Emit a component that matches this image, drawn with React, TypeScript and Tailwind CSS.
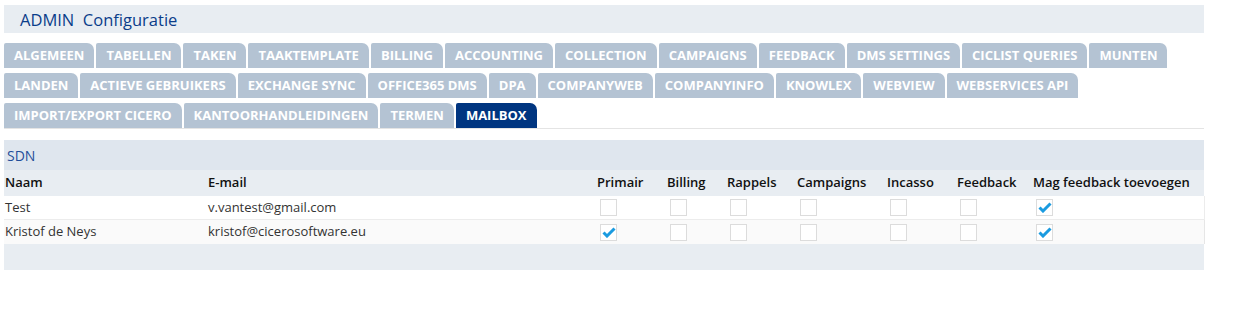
import React from 'react';

const tabs = [
  'ALGEMEEN', 'TABELLEN', 'TAKEN', 'TAAKTEMPLATE', 'BILLING', 'ACCOUNTING', 'COLLECTION', 'CAMPAIGNS',
  'FEEDBACK', 'DMS SETTINGS', 'CICLIST QUERIES', 'MUNTEN', 'LANDEN', 'ACTIEVE GEBRUIKERS', 'EXCHANGE SYNC',
  'OFFICE365 DMS', 'DPA', 'COMPANYWEB', 'COMPANYINFO', 'KNOWLEX', 'WEBVIEW', 'WEBSERVICES API',
  'IMPORT/EXPORT CICERO', 'KANTOORHANDLEIDINGEN', 'TERMEN', 'MAILBOX',
];

const columns = ['Primair', 'Billing', 'Rappels', 'Campaigns', 'Incasso', 'Feedback', 'Mag feedback toevoegen'];

const rows = [
  { name: 'Test', email: 'v.vantest@gmail.com', checks: [false, false, false, false, false, false, true] },
  { name: 'Kristof de Neys', email: 'kristof@cicerosoftware.eu', checks: [true, false, false, false, false, false, true] },
];

const gridCols = 'grid grid-cols-[204px_389px_70px_60px_70px_90px_70px_76px_1fr]';

const Checkbox = ({ checked }: { checked: boolean }) => (
  <div className="ml-[3px] w-[17px] h-[17px] border border-[#dcdcdc] bg-white flex items-center justify-center">
    {checked && (
      <svg width="14" height="11" viewBox="0 0 14 11">
        <path d="M1.5 5.5 L5 9 L12.5 1.5" fill="none" stroke="#1a9be0" strokeWidth="3" />
      </svg>
    )}
  </div>
);

export default function App() {
  return (
    <div className="w-[1237px] h-[309px] bg-white pt-[5px] px-[4px]" style={{ fontFamily: '"Open Sans", sans-serif' }}>
      <div className="w-[1200px]">
        {/* Header */}
        <div className="h-[28px] bg-[#e8edf2] flex items-center pl-[16px] pt-[2px] text-[16.5px] text-[#0b3d8a] whitespace-pre">
          {'ADMIN  Configuratie'}
        </div>

        {/* Tabs */}
        <div className="mt-[10px] flex flex-wrap gap-x-[2px] gap-y-[5px] border-b border-[#e4e4e4]">
          {tabs.map((t) => (
            <div
              key={t}
              className={
                'h-[25px] px-[10px] flex items-center text-[13px] font-bold text-white rounded-tl-[2px] rounded-tr-[7px] ' +
                (t === 'MAILBOX' ? 'bg-[#003580]' : 'bg-[#b4c3d3]')
              }
            >
              {t}
            </div>
          ))}
        </div>

        {/* SDN table */}
        <div className="mt-[11px]">
          <div className="h-[30px] bg-[#dfe6ee] flex items-center pl-[3px] text-[14px] text-[#1f4e99]">SDN</div>
          <div className={gridCols + ' h-[26px] items-center bg-[#e8edf2] text-[13px] font-semibold text-[#111]'}>
            <div className="pl-[1px]">Naam</div>
            <div>E-mail</div>
            {columns.map((c) => (
              <div key={c} className="whitespace-nowrap">{c}</div>
            ))}
          </div>
          {rows.map((r, i) => (
            <div
              key={r.name}
              className={
                gridCols +
                ' h-[24px] items-center text-[13px] text-[#333] border-r border-[#e6e6e6] w-[1201px] ' +
                (i === 0 ? 'bg-white border-b border-[#ececec]' : 'bg-[#fafafa]')
              }
            >
              <div className="pl-[1px]">{r.name}</div>
              <div>{r.email}</div>
              {r.checks.map((c, j) => (
                <div key={j}>
                  <Checkbox checked={c} />
                </div>
              ))}
            </div>
          ))}
          <div className="h-[26px] bg-[#e8edf2]" />
        </div>
      </div>
    </div>
  );
}
